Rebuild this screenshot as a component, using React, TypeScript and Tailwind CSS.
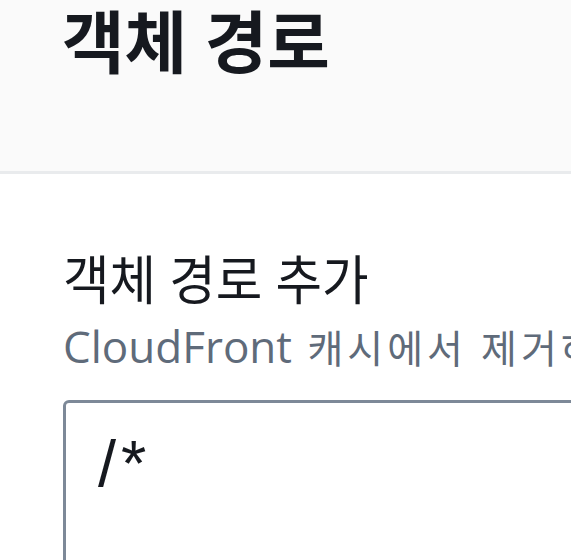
import React from 'react';

const font = { fontFamily: '"Open Sans", "Noto Sans CJK KR", sans-serif' };

export default function App() {
  return (
    <div className="w-[571px] h-[560px] overflow-hidden bg-white" style={font}>
      {/* Page header */}
      <div className="h-[174px] bg-[#fafafa] border-b-[3px] border-[#e9ebed] pl-[62px]">
        <h1 className="text-[68px] leading-[84px] font-bold text-[#16191f] whitespace-nowrap">
          객체 경로
        </h1>
      </div>

      {/* Form field */}
      <div className="pl-[63px] pt-[75px]">
        <label className="block origin-left scale-x-[0.955] text-[53px] leading-[61px] text-[#16191f] whitespace-nowrap">
          객체 경로 추가
        </label>
        <p className="mt-[11px] text-[44px] leading-[50px] text-[#5f6b7a] whitespace-nowrap">
          CloudFront{' '}
          <span className="ml-[4px] text-[39px] leading-[30px] tracking-[4px]">
            캐시에서 제거하려는 객체의 경로를 입력하세요.
          </span>
        </p>
        <div className="mt-[29px] w-[600px] h-[300px] border-[3px] border-[#7d8998] rounded-[6px] bg-white pl-[32px] pt-[25px]">
          <span className="font-['Liberation_Sans',sans-serif] text-[65px] leading-[72px] tracking-[5px] text-[#16191f]">/*</span>
        </div>
      </div>
    </div>
  );
}
